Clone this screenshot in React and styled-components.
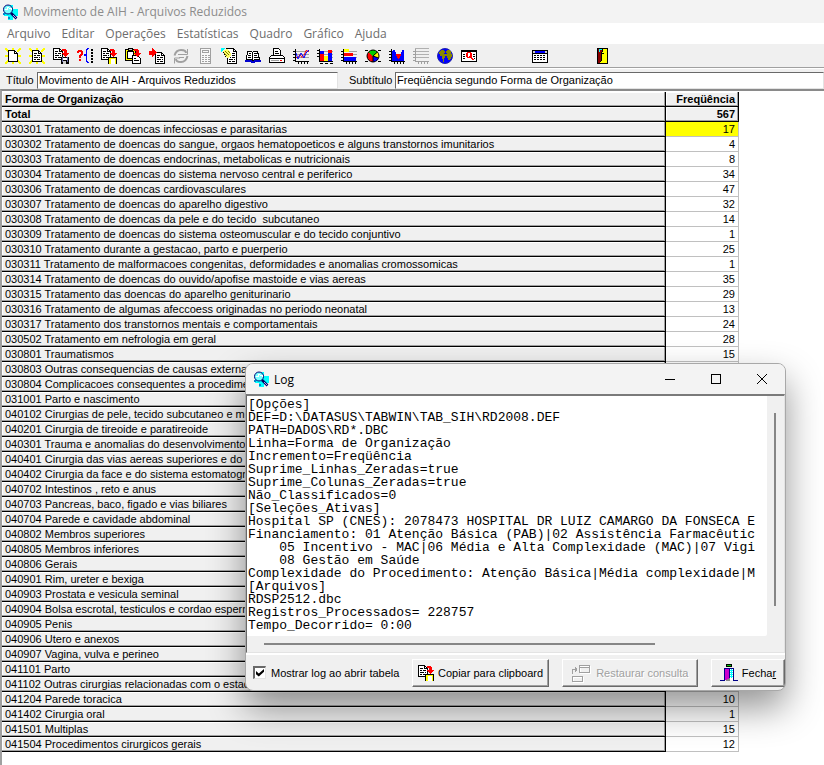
import React, { useState } from 'react';
import styled, { createGlobalStyle } from 'styled-components';

const GlobalStyle = createGlobalStyle`
  * { box-sizing: border-box; }
  body {
    margin: 0;
    background: #fff;
    font-family: "Liberation Sans", Arial, sans-serif;
    font-size: 11px;
    color: #000;
    overflow: hidden;
  }
  button, input, textarea { font: inherit; color: inherit; }
`;

const Window = styled.div`
  position: relative;
  min-height: 100vh;
  display: flex;
  flex-direction: column;
`;

const TitleBar = styled.header`
  display: flex;
  align-items: center;
  gap: 5px;
  height: 23px;
  padding-left: 2px;
  background: #f3f3f3;
  color: #8c8c8c;
  font: 12px "Open Sans", "Noto Sans", sans-serif;
`;

const MenuBar = styled.nav`
  display: flex;
  align-items: center;
  gap: 11px;
  height: 21px;
  padding-left: 7px;
  background: #fff;
`;

const MenuItem = styled.button`
  padding: 0;
  border: 0;
  background: none;
  color: #6d6d6d;
  font: 12px "Open Sans", "Noto Sans", sans-serif;
`;

const Toolbar = styled.div`
  display: flex;
  align-items: center;
  height: 24px;
  padding-left: 1px;
  background: #f0f0f0;
  border-bottom: 1px solid #a0a0a0;
`;

const ToolButton = styled.button`
  display: flex;
  align-items: center;
  justify-content: center;
  width: 24px;
  height: 22px;
  margin-left: ${props => props.$space || 0}px;
  padding: 0;
  border: 0;
  background: none;
`;

const Fields = styled.div`
  display: grid;
  grid-template-columns: 31px 301px 57px 1fr;
  align-items: center;
  height: 21px;
  padding: 2px 0 0 6px;
  background: #f0f0f0;
  border-top: 1px solid #fff;
`;

const FieldLabel = styled.label`
  padding-left: ${props => props.$indent || 0}px;
  white-space: nowrap;
`;

const Field = styled.input`
  width: 100%;
  height: 17px;
  padding: 0 1px;
  border: 1px solid #e3e3e3;
  border-top-color: #696969;
  border-left-color: #696969;
  background: #fff;
  outline: 0;
`;

const GridArea = styled.main`
  flex: 1;
  border-top: 2px solid #8a8a8a;
  border-left: 2px solid #a0a0a0;
  padding-top: 1px;
`;

const Grid = styled.table`
  width: 737px;
  table-layout: fixed;
  border-collapse: separate;
  border-spacing: 0;
  line-height: 13px;
`;

const HeadCell = styled.th`
  width: ${props => props.$width || 'auto'};
  height: 15px;
  padding: 0 3px;
  overflow: hidden;
  background: #f0f0f0;
  border-right: 1px solid #000;
  border-bottom: 1px solid #000;
  box-shadow: inset -1px -1px #a0a0a0, inset 1px 1px #fff;
  font-weight: ${props => props.$plain ? 'normal' : 'bold'};
  text-align: ${props => props.$right ? 'right' : 'left'};
  white-space: pre;
`;

const ValueCell = styled.td`
  height: 15px;
  padding: 0 3px;
  background: ${props => props.$selected ? '#ff0' : '#fff'};
  border-right: 1px solid #c0c0c0;
  border-bottom: 1px solid #c0c0c0;
  text-align: right;
`;

const Dialog = styled.section`
  position: absolute;
  left: 245px;
  top: 363px;
  width: 541px;
  overflow: hidden;
  background: #f0f0f0;
  border: 1px solid #a8a8a8;
  border-radius: 8px;
  box-shadow: 0 17px 36px rgba(0, 0, 0, 0.42);
`;

const DialogTitle = styled.div`
  display: flex;
  align-items: center;
  height: 30px;
  padding-left: 7px;
  background: #f3f3f3;
  font: 12px "Open Sans", "Noto Sans", sans-serif;
`;

const DialogName = styled.span`
  flex: 1;
  padding-left: 5px;
`;

const CaptionButton = styled.button`
  display: flex;
  align-items: center;
  justify-content: center;
  width: 46px;
  height: 30px;
  padding: 0;
  border: 0;
  background: none;
`;

const LogBox = styled.div`
  display: grid;
  grid-template-columns: 1fr 17px;
  grid-template-rows: 240px 16px;
  border: 1px solid #e3e3e3;
  border-top: 2px solid #7a7a7a;
  border-left-color: #696969;
`;

const LogText = styled.textarea`
  display: block;
  width: 100%;
  height: 240px;
  padding: 2px 0 0 1px;
  border: 0;
  border-radius: 0 0 2px 0;
  outline: 0;
  resize: none;
  overflow: hidden;
  background: #fff;
  font: 13px/13px "Liberation Mono", "Courier New", monospace;
  white-space: pre;
`;

const VerticalTrack = styled.div`
  padding: 17px 0 30px 7px;
  &::before {
    content: "";
    display: block;
    width: 2px;
    height: 100%;
    background: #868686;
  }
`;

const HorizontalTrack = styled.div`
  padding: 7px 112px 0 17px;
  &::before {
    content: "";
    display: block;
    height: 2px;
    background: #868686;
  }
`;

const Footer = styled.footer`
  display: flex;
  align-items: center;
  gap: 13px;
  height: 37px;
  padding-left: 7px;
  border-top: 2px solid #fff;
`;

const CheckLabel = styled.label`
  display: flex;
  align-items: center;
  gap: 5px;
  flex: 1;
  white-space: nowrap;
`;

const CheckBox = styled.input`
  appearance: none;
  width: 13px;
  height: 13px;
  margin: 0;
  background: #fff;
  border: 1px solid #e3e3e3;
  border-top: 2px solid #696969;
  border-left: 2px solid #696969;
  &:checked::before {
    content: "";
    display: block;
    width: 8px;
    height: 8px;
    margin: 1px;
    background: #000;
    clip-path: polygon(0 25%, 35% 55%, 100% 0, 100% 35%, 35% 95%, 0 65%);
  }
`;

const PushButton = styled.button`
  display: flex;
  align-items: center;
  justify-content: center;
  gap: ${props => props.$gap || 4}px;
  width: ${props => props.$width || 138}px;
  height: 28px;
  padding: 0;
  background: #f0f0f0;
  border: 1px solid #fff;
  border-right-color: #696969;
  border-bottom-color: #696969;
  box-shadow: inset -1px -1px #a0a0a0;
  white-space: nowrap;
  &:disabled {
    color: #a0a0a0;
    text-shadow: 1px 1px #fff;
  }
`;

/********* ICONS *********** */

const Svg = ({ children, w = 16, h = 16 }) => (
  <svg width={w} height={h} viewBox={`0 0 ${w} ${h}`} fill="none" stroke="#000" shapeRendering="crispEdges" aria-hidden="true">
    {children}
  </svg>
);

const Page = ({ x = 0, y = 0, lines }) => (
  <g transform={`translate(${x} ${y})`}>
    <path d="M.5 .5h6l3 3v8h-9z" fill="#fff" />
    <path d="M6.5 .5v3h3" />
    {lines && <path d="M2 3.5h3M2 5.5h2M5 5.5h3M2 7.5h4M7 7.5h1M2 9.5h2M5 9.5h3" />}
  </g>
);

const Rays = () => (
  <path
    fill="#ff0"
    stroke="none"
    d="M0 0h2v1h1v1h1v2H2V3H1V2H0zM14 0h2v2h-1v1h-1v1h-2V2h1V1h1zM0 14h1v-1h1v-1h2v2H3v1H2v1H0zM12 12h2v1h1v1h1v2h-2v-1h-1v-1h-1zM7 0h2v2H7zM0 7h3v2H0zM13 7h3v2h-3zM7 14h2v2H7z"
  />
);

const RedArrow = ({ x = 0, y = 0 }) => (
  <path transform={`translate(${x} ${y})`} d="M0 0h4v1h1v3h2v1h-1v1h-1v1h-1v1h-1v-1h-1v-1h-1v-1h-1v-1h2v-2h-2z" fill="#f00" stroke="none" />
);

const Axes = ({ color = '#000' }) => (
  <path stroke={color} d="M2.5 1v12.500h13.500M0 3.5h2M0 6.500h2M0 9.500h2M0 12.500h2M5.500 14v2M8.500 14v2M11.500 14v2M14.500 14v2" />
);

const GridLines = () => <path stroke="#a0a0a0" d="M3 3.5h13M3 6.5h13M3 9.5h13" />;

const AppIcon = () => (
  <Svg>
    <path d="M6 1h5v4h5v7h-5v4H6v-4H2V5h4z" fill="#0ff" stroke="none" />
    <circle cx="6" cy="5.500" r="4.500" fill="#7ff" stroke="#007" shapeRendering="auto" />
    <path d="M3 5h2V3h2M7 4h2v2" stroke="#fff" />
    <path d="M9 9l5.500 5.500" stroke="#006" strokeWidth="2.500" shapeRendering="auto" />
    <path d="M11 11l3 3" stroke="#aaf" shapeRendering="auto" />
    <path d="M1 9h2v2H1zM6 13h2v2H6z" fill="#08c" stroke="none" />
  </Svg>
);

const CopyIcon = () => (
  <Svg>
    <Page lines />
    <path d="M7 9h9v7H7z" fill="#000" stroke="none" />
    <path d="M8 10h7v6H8z" fill="#ff0" stroke="none" />
    <path d="M10 11h4v5h-4z" fill="#fff" stroke="none" />
    <RedArrow x={9} y={1} />
  </Svg>
);

const icons = {
  novo: <Svg><Rays /><Page x={3} y={2} /></Svg>,
  abrir: <Svg><Rays /><Page x={3} y={2} lines /></Svg>,
  salvar: (
    <Svg>
      <Page lines />
      <path d="M8 9h8v7H8z" fill="#000" stroke="none" />
      <path d="M9 9h1v5H9zM14 9h1v5h-1z" fill="#66a" stroke="none" />
      <path d="M10 10h4v2h-4z" fill="#fff" stroke="none" />
      <path d="M10 13h3v3h-3z" fill="#ccc" stroke="none" />
      <RedArrow x={9} y={1} />
    </Svg>
  ),
  consulta: (
    <Svg>
      <path fill="#f00" stroke="none" d="M1 2h4v1h1v4H5v1H4v2H2V7h1V6h1V4H2v1H0V3h1zM2 11h2v2H2z" />
      <path stroke="#00f" d="M12 .5h-1.500v1h-1v5H7v1h2.500v6h1v1H12" />
      <path strokeWidth="2" strokeDasharray="2 1" d="M15 1v14" />
    </Svg>
  ),
  copiar: <CopyIcon />,
  colar: (
    <Svg>
      <path d="M.5 1.500h10v11H.5z" fill="#ff0" />
      <path d="M2.500 3.500h6v7h-6z" fill="#fff" />
      <path d="M3.500 .5h4v2h-4z" fill="#ccc" />
      <g transform="translate(7 7)"><path d="M.5 .5h5l3 3v5h-8z" fill="#fff" /><path d="M2 3.500h2M2 5.500h5" /></g>
      <RedArrow x={9} y={1} />
    </Svg>
  ),
  incluir: (
    <Svg>
      <Page x={6} y={4} lines />
      <path d="M0 3h3V0h1v1h1v1h1v1h1v1h1v1H7v1H6v1H5v1H4v1H3V7H0z" fill="#f00" stroke="none" />
    </Svg>
  ),
  atualizar: (
    <Svg>
      <g stroke="#a0a0a0" shapeRendering="auto">
        <path strokeWidth="2" d="M1.500 7.500Q3 2 8 2t5 3M14.500 8Q13 14 8 14t-5-3" />
        <path d="M14.500 1v5.500H9M1.500 15.500V10H7M5 6.500h5M6 9.500h5" />
      </g>
    </Svg>
  ),
  calculadora: (
    <Svg>
      <path d="M3.500 .5h10v15h-10z" stroke="#a0a0a0" fill="#f8f8f8" />
      <path d="M5.500 2.500h6v2h-6z" stroke="#a0a0a0" />
      <path d="M5 7.500h8M5 9.500h8M5 11.500h8M5 13.500h8" stroke="#a0a0a0" strokeDasharray="2 1" />
    </Svg>
  ),
  editar: (
    <Svg>
      <path d="M5.500 .5h7l3 3v12h-9v-5z" fill="#fff" />
      <path d="M12.500 .5v3h3M11 5.500h3M11 7.500h3M9 9.500h1M11 9.500h3M8 11.500h4M13 11.500h1M8 13.500h2M11 13.500h3" />
      <path d="M2 3h1V2h2V1h2v1h1v1h1v2h1v3H9v1H8v1H6V9H5V8H4V7H3V5H2z" fill="#ff6" stroke="none" />
      <path d="M4 3h1v1h1v1h1v1h1v1H7V6H6V5H5V4H4zM7 3h1v1h1v1H8V4H7zM3 5h1v1h1v1h1v1H5V7H4V6H3z" fill="#770" stroke="none" />
      <path d="M0 0h4v1H3v1H2v1H1v1H0z" fill="#0ff" stroke="none" />
      <path d="M2 4.500h1M3 6.500h1M4 8.500h1" />
    </Svg>
  ),
  livro: (
    <Svg>
      <path d="M0 12h7v1h2v-1h7v2h-6v1H6v-1H0z" fill="#00c" stroke="none" />
      <path d="M1.500 11.500l1-8h4l1 1 1-1h4l2 8h-5l-1 1-2-1z" fill="#fff" />
      <path d="M7.500 4v8M4 5.500h2M3 7.500h3M3 9.500h3M9 5.500h3M9 7.500h3M9 9.500h4" />
    </Svg>
  ),
  imprimir: (
    <Svg>
      <path d="M4.500 7.500v-7h5l2 2v5" fill="#fff" />
      <path d="M6 3.500h3M6 5.500h4" />
      <path d="M2.500 7.500h11l2 2v5H.5v-5z" fill="#fff" />
      <path d="M1 10.500h14M1 14.500h14" />
      <path d="M2 12.500h8" stroke="#a0a0a0" /><path d="M11 12.500h2" stroke="#f00" />
    </Svg>
  ),
  linhas: (
    <Svg>
      <GridLines /><Axes />
      <g shapeRendering="auto"><path d="M3 9.500h2l2-3 2 3 2-2 2-5 3 1" stroke="#f00" /><path d="M3 5l2 6 3-6 3 5 2-5 3-3" stroke="#00f" /></g>
    </Svg>
  ),
  barras: (
    <Svg>
      <GridLines /><path d="M2.500 1v12.500H16M0 2.500h2M0 5.500h2M0 8.500h2M3 15.500h3M8 15.500h3M13 15.500h3" />
      <g stroke="none">
        <path d="M3 6h4v7H3zM11 2h4v3h-4z" fill="#f00" />
        <path d="M3 3h4v3H3zM11 5h4v8h-4z" fill="#00f" />
        <path d="M7 8h4v5H7z" fill="#ff0" />
      </g>
    </Svg>
  ),
  barrasH: (
    <Svg>
      <GridLines /><Axes />
      <g stroke="none"><path d="M3 1h5v3H3z" fill="#ff0" /><path d="M3 5h9v3H3z" fill="#f00" /><path d="M3 9h12v4H3z" fill="#00f" /></g>
    </Svg>
  ),
  pizza: (
    <Svg>
      <path d="M0 2.500h3M13 2.500h3M0 13.500h3M13 13.500h3" />
      <circle cx="8" cy="8" r="6" fill="#f00" stroke="none" />
      <path d="M8 8L3.500 4Q8 0 12.500 4z" fill="#0c0" stroke="none" />
      <path d="M8 8l4.500-4Q15 7 13.500 10z" fill="#ff0" stroke="none" />
      <path d="M8 8l5.500 2Q12 14 8 14z" fill="#00f" stroke="none" />
      <circle cx="8" cy="8" r="6" shapeRendering="auto" />
      <path d="M8 14V8l4.500-4M8 8l5.500 2" shapeRendering="auto" />
    </Svg>
  ),
  area: (
    <Svg>
      <Axes />
      <path d="M3 3h1V2h2v2h1v2h5V4h1V2h2v11H3z" fill="#00f" stroke="none" />
      <path d="M7 6h5v2h-1v2h-1v1H9v-1H8V8H7z" fill="#f00" stroke="none" />
    </Svg>
  ),
  grade: (
    <Svg>
      <path d="M3 3.500h13M3 6.500h13M3 9.500h13" stroke="#b0b0b0" /><Axes color="#a0a0a0" />
      <path d="M2 .5h14" stroke="#b0b0b0" />
    </Svg>
  ),
  mapa: (
    <Svg>
      <circle cx="8" cy="8" r="7.500" fill="#00f" stroke="#22a" shapeRendering="auto" />
      <path d="M4 2h3v1h1v2H7v1h2v2H8v2H7v4H6v-3H5V8H3V6H2V4h1V3h1zM10 2h3v1h1v3h1v3h-1v2h-1v1h-2v-2h-1V8H9V6h1V5H9V3h1z" fill="#880" stroke="none" />
    </Svg>
  ),
  sql: (
    <Svg>
      <path d="M.5 2.500h15v11H.5z" fill="#fff" />
      <path d="M0 3h16M2 6.500h2M12 6.500h2M2 8.500h2M12 8.500h2M2 10.500h2M13 10.500h1" />
      <path d="M6 4h4v1h1v5h1v1h1v1h-2v-1h-1v-1H6V9H5V5h1zM7 5v4h1V8h1V5z" fill="#f00" stroke="none" />
    </Svg>
  ),
  tabela: (
    <Svg>
      <path d="M.5 2.500h15v12H.5z" fill="#fff" />
      <path d="M3 4h10" stroke="#00f" strokeWidth="2" /><path d="M1 4h2M13 4h2" stroke="#ccc" strokeWidth="2" />
      <path d="M0 5.500h16" />
      <path d="M2 7.500h12M2 9.500h12M2 11.500h12" strokeDasharray="2 1" />
    </Svg>
  ),
  sair: (
    <Svg>
      <path d="M3.500 .5h10v15h-10z" fill="#ff0" />
      <path d="M4 1h4v12H7v1H6v1H4z" fill="#800" stroke="none" />
      <path d="M5 1h3v1H6v2H5z" fill="#0ff" stroke="none" />
      <path d="M8.500 1v3M7.500 4v9M8 5.500h2M6.500 13v1" />
    </Svg>
  ),
};

const RestoreIcon = () => (
  <Svg w={20} h={20}>
    <path stroke="#fff" d="M9.500 3.500h10v7h-10zM2.500 14.500h10v5h-10z" />
    <path stroke="#a0a0a0" d="M8.500 2.500h10v7h-10zM9 4.500h9M1.500 13.500h10v5h-10zM1.500 11V6.500h4M4.500 4v5M5.500 5v3" />
  </Svg>
);

const CloseIcon = () => (
  <Svg w={18} h={18}>
    <path d="M6.500 .5h5v2h-5z" fill="#0c0" />
    <path d="M4 4h10v12H4z" fill="#fff" stroke="none" />
    <path d="M5 5h4v11H5z" fill="#c0c" stroke="none" />
    <path d="M10 5h3v9h-3z" fill="#0ff" stroke="none" />
    <path d="M10.500 5v9M12.500 5v9" stroke="#fff" strokeDasharray="1 1" />
    <path d="M0 16.500h4.500v-12h9v12H18M9.500 5v11" stroke="#008" />
    <path d="M6 16l4-2v3H6z" fill="#888" stroke="none" />
  </Svg>
);

/********* DATA *********** */

const menus = ['Arquivo', 'Editar', 'Operações', 'Estatísticas', 'Quadro', 'Gráfico', 'Ajuda'];

const tools = [
  ['novo', 'Novo'], ['abrir', 'Abrir'], ['salvar', 'Salvar'], ['consulta', 'Consulta'],
  ['copiar', 'Copiar'], ['colar', 'Colar'], ['incluir', 'Incluir'], ['atualizar', 'Atualizar'],
  ['calculadora', 'Calculadora'], ['editar', 'Editar'], ['livro', 'Legenda'], ['imprimir', 'Imprimir'],
  ['linhas', 'Linhas'], ['barras', 'Barras'], ['barrasH', 'Barras horizontais'], ['pizza', 'Setores'],
  ['area', 'Áreas'], ['grade', 'Grade'], ['mapa', 'Mapa'], ['sql', 'SQL'],
  ['tabela', 'Tabela', 47], ['sair', 'Sair', 38],
];

const rows = [
  ['030301 Tratamento de doencas infecciosas e parasitarias', 17],
  ['030302 Tratamento de doencas do sangue, orgaos hematopoeticos e alguns transtornos imunitarios', 4],
  ['030303 Tratamento de doencas endocrinas, metabolicas e nutricionais', 8],
  ['030304 Tratamento de doencas do sistema nervoso central e periferico', 34],
  ['030306 Tratamento de doencas cardiovasculares', 47],
  ['030307 Tratamento de doencas do aparelho digestivo', 32],
  ['030308 Tratamento de doencas da pele e do tecido  subcutaneo', 14],
  ['030309 Tratamento de doencas do sistema osteomuscular e do tecido conjuntivo', 1],
  ['030310 Tratamento durante a gestacao, parto e puerperio', 25],
  ['030311 Tratamento de malformacoes congenitas, deformidades e anomalias cromossomicas', 1],
  ['030314 Tratamento de doencas do ouvido/apofise mastoide e vias aereas', 35],
  ['030315 Tratamento das doencas do aparelho geniturinario', 29],
  ['030316 Tratamento de algumas afeccoess originadas no periodo neonatal', 13],
  ['030317 Tratamento dos transtornos mentais e comportamentais', 24],
  ['030502 Tratamento em nefrologia em geral', 28],
  ['030801 Traumatismos', 15],
  ['030803 Outras consequencias de causas externas'],
  ['030804 Complicacoes consequentes a procedimentos'],
  ['031001 Parto e nascimento'],
  ['040102 Cirurgias de pele, tecido subcutaneo e mucosa'],
  ['040201 Cirurgia de tireoide e paratireoide'],
  ['040301 Trauma e anomalias do desenvolvimento'],
  ['040401 Cirurgia das vias aereas superiores e do pescoco'],
  ['040402 Cirurgia da face e do sistema estomatognatico'],
  ['040702 Intestinos , reto e anus'],
  ['040703 Pancreas, baco, figado e vias biliares'],
  ['040704 Parede e cavidade abdominal'],
  ['040802 Membros superiores'],
  ['040805 Membros inferiores'],
  ['040806 Gerais'],
  ['040901 Rim, ureter e bexiga'],
  ['040903 Prostata e vesicula seminal'],
  ['040904 Bolsa escrotal, testiculos e cordao espermatico'],
  ['040905 Penis'],
  ['040906 Utero e anexos'],
  ['040907 Vagina, vulva e perineo'],
  ['041101 Parto'],
  ['041102 Outras cirurgias relacionadas com o estado gestacional'],
  ['041204 Parede toracica', 10],
  ['041402 Cirurgia oral', 1],
  ['041501 Multiplas', 15],
  ['041504 Procedimentos cirurgicos gerais', 12],
];

const log = `[Opções]
DEF=D:\\DATASUS\\TABWIN\\TAB_SIH\\RD2008.DEF
PATH=DADOS\\RD*.DBC
Linha=Forma de Organização
Incremento=Freqüência
Suprime_Linhas_Zeradas=true
Suprime_Colunas_Zeradas=true
Não_Classificados=0
[Seleções_Ativas]
Hospital SP (CNES): 2078473 HOSPITAL DR LUIZ CAMARGO DA FONSECA E
Financiamento: 01 Atenção Básica (PAB)|02 Assistência Farmacêutic
    05 Incentivo - MAC|06 Média e Alta Complexidade (MAC)|07 Vigi
    08 Gestão em Saúde
Complexidade do Procedimento: Atenção Básica|Média complexidade|M
[Arquivos]
RDSP2512.dbc
Registros_Processados= 228757
Tempo_Decorrido= 0:00`;

function LogDialog({ onClose }) {
  const [showLog, setShowLog] = useState(true);

  return (
    <Dialog role="dialog" aria-label="Log">
      <DialogTitle>
        <AppIcon />
        <DialogName>Log</DialogName>
        <CaptionButton aria-label="Minimizar"><Svg w={12} h={12}><path d="M1 6.500h10" /></Svg></CaptionButton>
        <CaptionButton aria-label="Maximizar"><Svg w={12} h={12}><rect x="1.500" y="1.500" width="9" height="9" rx="1" /></Svg></CaptionButton>
        <CaptionButton aria-label="Fechar janela" onClick={onClose}>
          <Svg w={12} h={12}><path d="M1 1l10 10M11 1L1 11" shapeRendering="auto" /></Svg>
        </CaptionButton>
      </DialogTitle>
      <LogBox>
        <LogText aria-label="Log" readOnly wrap="off" value={log} />
        <VerticalTrack />
        <HorizontalTrack />
      </LogBox>
      <Footer>
        <CheckLabel>
          <CheckBox type="checkbox" checked={showLog} onChange={e => setShowLog(e.target.checked)} />
          Mostrar log ao abrir tabela
        </CheckLabel>
        <PushButton><CopyIcon />Copiar para clipboard</PushButton>
        <PushButton disabled $gap={5}><RestoreIcon />Restaurar consulta</PushButton>
        <PushButton $width={75} onClick={onClose}><CloseIcon /><span>Fecha<u>r</u></span></PushButton>
      </Footer>
    </Dialog>
  );
}

export default function App() {
  const [open, setOpen] = useState(true);
  const [title, setTitle] = useState('Movimento de AIH - Arquivos Reduzidos');
  const [subtitle, setSubtitle] = useState('Freqüência segundo Forma de Organização');
  const [selected, setSelected] = useState(0);

  return (
    <Window>
      <GlobalStyle />
      <TitleBar><AppIcon /><span>Movimento de AIH - Arquivos Reduzidos</span></TitleBar>
      <MenuBar>
        {menus.map(item => <MenuItem key={item}>{item}</MenuItem>)}
      </MenuBar>
      <Toolbar>
        {tools.map(([id, label, space]) => (
          <ToolButton key={id} aria-label={label} $space={space}>{icons[id]}</ToolButton>
        ))}
      </Toolbar>
      <Fields>
        <FieldLabel htmlFor="titulo">Título</FieldLabel>
        <Field id="titulo" value={title} onChange={e => setTitle(e.target.value)} />
        <FieldLabel htmlFor="subtitulo" $indent={11}>Subtítulo</FieldLabel>
        <Field id="subtitulo" value={subtitle} onChange={e => setSubtitle(e.target.value)} />
      </Fields>
      <GridArea>
        <Grid>
          <thead>
            <tr>
              <HeadCell scope="col">Forma de Organização</HeadCell>
              <HeadCell scope="col" $right $width="73px">Freqüência</HeadCell>
            </tr>
            <tr>
              <HeadCell scope="row">Total</HeadCell>
              <HeadCell $right>567</HeadCell>
            </tr>
          </thead>
          <tbody>
            {rows.map(([name, value], i) => (
              <tr key={name} onClick={() => setSelected(i)}>
                <HeadCell scope="row" $plain>{name}</HeadCell>
                <ValueCell $selected={i === selected}>{value}</ValueCell>
              </tr>
            ))}
          </tbody>
        </Grid>
      </GridArea>
      {open && <LogDialog onClose={() => setOpen(false)} />}
    </Window>
  );
}
